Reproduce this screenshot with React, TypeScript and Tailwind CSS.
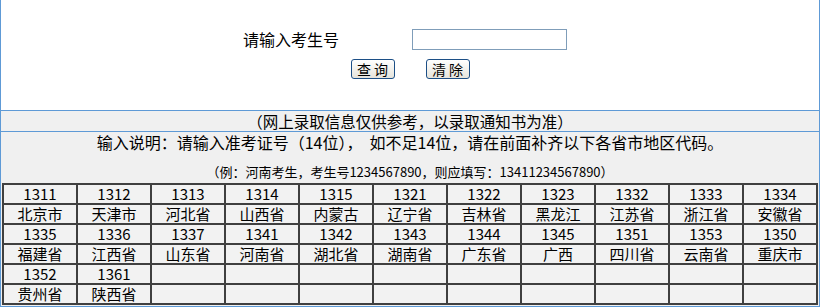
import { Fragment } from 'react'

const ROWS = [
  {
    codes: ['1311', '1312', '1313', '1314', '1315', '1321', '1322', '1323', '1332', '1333', '1334'],
    names: ['北京市', '天津市', '河北省', '山西省', '内蒙古', '辽宁省', '吉林省', '黑龙江', '江苏省', '浙江省', '安徽省'],
  },
  {
    codes: ['1335', '1336', '1337', '1341', '1342', '1343', '1344', '1345', '1351', '1353', '1350'],
    names: ['福建省', '江西省', '山东省', '河南省', '湖北省', '湖南省', '广东省', '广西', '四川省', '云南省', '重庆市'],
  },
  {
    codes: ['1352', '1361', '', '', '', '', '', '', '', '', ''],
    names: ['贵州省', '陕西省', '', '', '', '', '', '', '', '', ''],
  },
]

function XpButton({ label }: { label: string }) {
  return (
    <button className="w-[44px] h-[20px] rounded-[3px] border border-[#1c4f86] bg-gradient-to-b from-white to-[#e6e4dc] text-[14px] leading-[18px] text-black text-center whitespace-pre">
      {label}
    </button>
  )
}

function Cell({ text }: { text: string }) {
  return (
    <td className="h-[20px] p-0 border border-[#404040] text-center text-[15px] leading-[18px] bg-[#f2f2f2] overflow-hidden">
      {text}
    </td>
  )
}

export default function App() {
  return (
    <div className="w-[821px] h-[307px] bg-white overflow-hidden font-['SimSun','Noto_Sans_CJK_SC',sans-serif] text-black">
      <div className="w-[820px] border-x border-[#5e9ad6]">
        {/* Query form */}
        <div className="h-[110px] pt-[29px]">
          <div className="flex items-center h-[21px] pl-[242px]">
            <span className="text-[16px] leading-[21px] w-[169px]">请输入考生号</span>
            <input
              type="text"
              className="w-[155px] h-[21px] border border-[#7f9db9] bg-white outline-none"
            />
          </div>
          <div className="flex justify-center gap-[31px] mt-[9px]">
            <XpButton label="查 询" />
            <XpButton label="清 除" />
          </div>
        </div>

        {/* Notice */}
        <div className="h-[21px] border-t border-[#5e9ad6] bg-[#f0f0f0] text-center text-[15.5px] leading-[20px]">
          （网上录取信息仅供参考，以录取通知书为准）
        </div>

        {/* Instructions + table */}
        <div className="border-t border-b border-[#5e9ad6] bg-[#f0f0f0] pb-[1px]">
          <div className="text-center text-[16px] leading-[20px] h-[20px]">
            输入说明：请输入准考证号（14位）， &nbsp;如不足14位，请在前面补齐以下各省市地区代码。
          </div>
          <div className="text-center text-[13px] leading-[16px] h-[16px] mt-[12px]">
            （例：河南考生，考生号1234567890，则应填写：13411234567890）
          </div>
          <table className="mt-[3px] mx-[1px] w-[816px] table-fixed border-separate border-spacing-0 border border-[#404040]">
            <tbody>
              {ROWS.map((row, i) => (
                <Fragment key={i}>
                  <tr>
                    {row.codes.map((c, j) => (
                      <Cell key={j} text={c} />
                    ))}
                  </tr>
                  <tr>
                    {row.names.map((n, j) => (
                      <Cell key={j} text={n} />
                    ))}
                  </tr>
                </Fragment>
              ))}
            </tbody>
          </table>
        </div>
      </div>
    </div>
  )
}
